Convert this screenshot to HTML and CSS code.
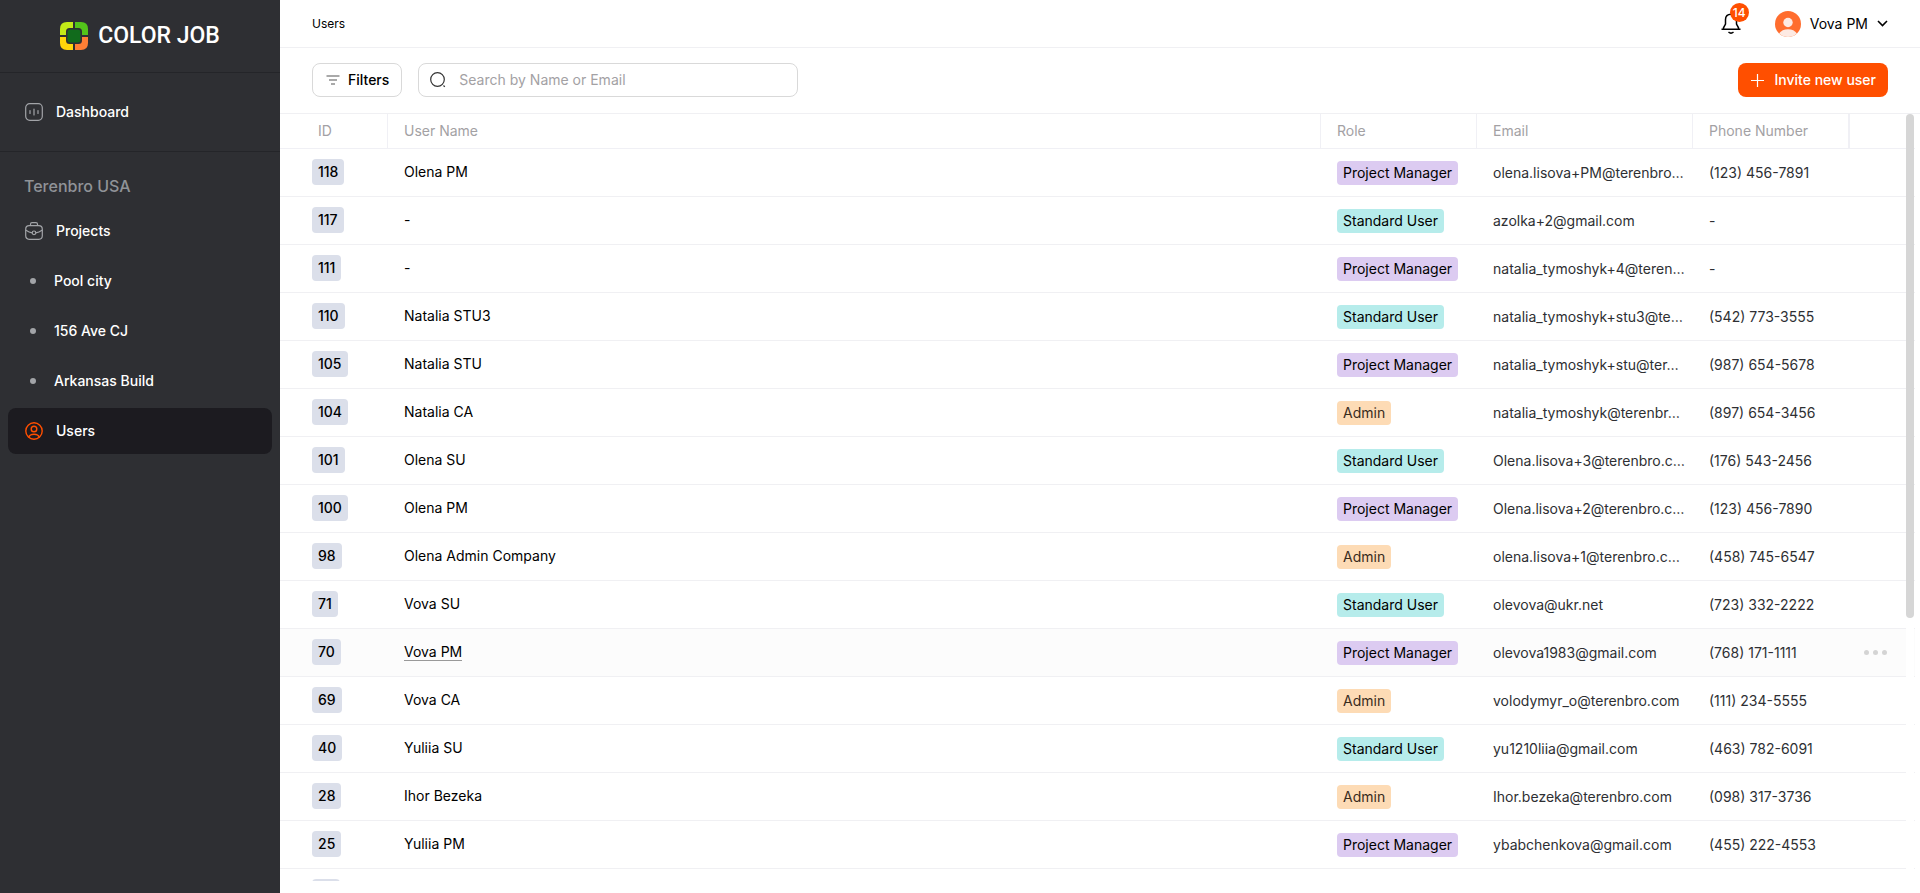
FILE: index.html
```html
<!DOCTYPE html>
<html lang="en">
<head>
<meta charset="utf-8">
<title>Users – Color Job</title>
<link rel="stylesheet" href="styles.css">
</head>
<body>
<div class="app">
  <aside class="sidebar">
    <a class="brand" href="#">
      <svg class="brand-mark" width="28" height="28" viewBox="0 0 28 28" aria-hidden="true">
        <path fill="#c3ea17" d="M7 0h6v6H9.500Q6 6 6 9.500V13H0V7Q0 0 7 0z"/>
        <path fill="#53c41a" d="M15 0h6q7 0 7 7v6h-6V9.500Q22 6 18.500 6H15z"/>
        <path fill="#ffd60a" d="M0 15h6v3.500Q6 22 9.500 22H13v6H7q-7 0-7-7z"/>
        <path fill="#ff7f35" d="M22 15h6v6q0 7-7 7h-6v-6h3.500q3.500 0 3.500-3.500z"/>
        <rect x="7.500" y="7.500" width="13" height="13" rx="3" fill="#116b1c"/>
      </svg>
      <span class="brand-name">COLOR JOB</span>
    </a>
    <nav class="nav nav-main">
      <a class="nav-item" href="#">
        <svg class="nav-icon" viewBox="0 0 18 18" aria-hidden="true"><rect x=".7" y=".7" width="16.600" height="16.600" rx="4"/><path d="M5 7.500v3M9 6v6M13 7.500v3"/></svg>
        Dashboard
      </a>
    </nav>
    <nav class="nav nav-company">
      <h2 class="nav-title">Terenbro USA</h2>
      <a class="nav-item" href="#">
        <svg class="nav-icon" viewBox="0 0 18 18" aria-hidden="true"><rect x=".7" y="3.700" width="16.600" height="13.600" rx="3.500"/><path d="M5.500 3.500V2.200Q5.500.7 7 .7h4q1.500 0 1.500 1.500v1.300M1 8.300q3 2.200 6.200 2.600M17 8.300q-3 2.200-6.200 2.600"/><circle cx="9" cy="10.800" r="1.800"/></svg>
        Projects
      </a>
      <a class="nav-item nav-sub" href="#">Pool city</a>
      <a class="nav-item nav-sub" href="#">156 Ave CJ</a>
      <a class="nav-item nav-sub" href="#">Arkansas Build</a>
      <a class="nav-item nav-active" href="#" aria-current="page">
        <svg class="nav-icon" viewBox="0 0 18 18" aria-hidden="true"><circle cx="9" cy="9" r="8.200"/><circle cx="9" cy="7" r="2.800"/><path d="M3.800 15.200q.8-3 5.200-3t5.200 3"/></svg>
        Users
      </a>
    </nav>
  </aside>

  <main class="main">
    <header class="topbar">
      <h1 class="page-title">Users</h1>
      <div class="topbar-right">
        <button class="bell" type="button" aria-label="Notifications">
          <svg width="20" height="22" viewBox="0 0 20 22" aria-hidden="true"><path d="M.5 16.200h19M2.500 16V14.800L4.500 11V6.500Q4.500 1.200 10 1.200T15.500 6.500V11l2 3.800V16M7.500 19q2.500 2.200 5 0"/></svg>
          <span class="bell-count">14</span>
        </button>
        <button class="account" type="button">
          <svg width="26" height="26" viewBox="0 0 26 26" aria-hidden="true"><circle cx="13" cy="13" r="13" fill="#ff6d2e"/><circle cx="13" cy="11.500" r="4.700" fill="#fdeae3"/><path d="M4 22.500Q7 18.200 13 18.200T22 22.500Q18 26 13 26T4 22.500z" fill="#fdeae3"/></svg>
          Vova PM
          <svg class="chevron" width="11" height="7" viewBox="0 0 11 7" aria-hidden="true"><path d="M1 1l4.500 4.500L10 1"/></svg>
        </button>
      </div>
    </header>

    <div class="toolbar">
      <button class="filters" type="button">
        <svg width="14" height="10" viewBox="0 0 14 10" aria-hidden="true"><path d="M.5 1h13M3 5h8M5 9h4"/></svg>
        Filters
      </button>
      <label class="search">
        <svg width="16" height="16" viewBox="0 0 16 16" aria-hidden="true"><circle cx="7.500" cy="7.500" r="6.800"/><path d="M13.500 13.500l1.300 1.300"/></svg>
        <input type="search" placeholder="Search by Name or Email" aria-label="Search by Name or Email">
      </label>
      <button class="invite" type="button">
        <svg width="13" height="13" viewBox="0 0 13 13" aria-hidden="true"><path d="M6.500 0v13M0 6.500h13"/></svg>
        Invite new user
      </button>
    </div>

    <div class="table-area">
      <table class="users">
        <colgroup><col class="c-id"><col><col class="c-role"><col class="c-email"><col class="c-phone"><col class="c-act"></colgroup>
        <thead><tr><th class="id">ID</th><th>User Name</th><th>Role</th><th>Email</th><th class="phone-head">Phone Number</th><th class="act"></th></tr></thead>
        <tbody>
          <tr><td class="id"><span class="tag">118</span></td><td>Olena PM</td><td class="low"><span class="role pm">Project Manager</span></td><td class="low soft">olena.lisova+PM@terenbro…</td><td class="low soft">(123) 456-7891</td><td></td></tr>
          <tr><td class="id"><span class="tag">117</span></td><td>-</td><td class="low"><span class="role su">Standard User</span></td><td class="low soft">azolka+2@gmail.com</td><td class="low soft">-</td><td></td></tr>
          <tr><td class="id"><span class="tag">111</span></td><td>-</td><td class="low"><span class="role pm">Project Manager</span></td><td class="low soft">natalia_tymoshyk+4@teren…</td><td class="low soft">-</td><td></td></tr>
          <tr><td class="id"><span class="tag">110</span></td><td>Natalia STU3</td><td class="low"><span class="role su">Standard User</span></td><td class="low soft">natalia_tymoshyk+stu3@te…</td><td class="low soft">(542) 773-3555</td><td></td></tr>
          <tr><td class="id"><span class="tag">105</span></td><td>Natalia STU</td><td class="low"><span class="role pm">Project Manager</span></td><td class="low soft">natalia_tymoshyk+stu@ter…</td><td class="low soft">(987) 654-5678</td><td></td></tr>
          <tr><td class="id"><span class="tag">104</span></td><td>Natalia CA</td><td class="low"><span class="role ad">Admin</span></td><td class="low soft">natalia_tymoshyk@terenbr…</td><td class="low soft">(897) 654-3456</td><td></td></tr>
          <tr><td class="id"><span class="tag">101</span></td><td>Olena SU</td><td class="low"><span class="role su">Standard User</span></td><td class="low soft">Olena.lisova+3@terenbro.c…</td><td class="low soft">(176) 543-2456</td><td></td></tr>
          <tr><td class="id"><span class="tag">100</span></td><td>Olena PM</td><td class="low"><span class="role pm">Project Manager</span></td><td class="low soft">Olena.lisova+2@terenbro.c…</td><td class="low soft">(123) 456-7890</td><td></td></tr>
          <tr><td class="id"><span class="tag">98</span></td><td>Olena Admin Company</td><td class="low"><span class="role ad">Admin</span></td><td class="low soft">olena.lisova+1@terenbro.c…</td><td class="low soft">(458) 745-6547</td><td></td></tr>
          <tr><td class="id"><span class="tag">71</span></td><td>Vova SU</td><td class="low"><span class="role su">Standard User</span></td><td class="low soft">olevova@ukr.net</td><td class="low soft">(723) 332-2222</td><td></td></tr>
          <tr class="hovered"><td class="id"><span class="tag">70</span></td><td><a class="user-link" href="#">Vova PM</a></td><td class="low"><span class="role pm">Project Manager</span></td><td class="low soft">olevova1983@gmail.com</td><td class="low soft">(768) 171-1111</td><td class="act"><button class="more" type="button" aria-label="More actions"><i></i><i></i><i></i></button></td></tr>
          <tr><td class="id"><span class="tag">69</span></td><td>Vova CA</td><td class="low"><span class="role ad">Admin</span></td><td class="low soft">volodymyr_o@terenbro.com</td><td class="low soft">(111) 234-5555</td><td></td></tr>
          <tr><td class="id"><span class="tag">40</span></td><td>Yuliia SU</td><td class="low"><span class="role su">Standard User</span></td><td class="low soft">yu1210liia@gmail.com</td><td class="low soft">(463) 782-6091</td><td></td></tr>
          <tr><td class="id"><span class="tag">28</span></td><td>Ihor Bezeka</td><td class="low"><span class="role ad">Admin</span></td><td class="low soft">Ihor.bezeka@terenbro.com</td><td class="low soft">(098) 317-3736</td><td></td></tr>
          <tr><td class="id"><span class="tag">25</span></td><td>Yuliia PM</td><td class="low"><span class="role pm">Project Manager</span></td><td class="low soft">ybabchenkova@gmail.com</td><td class="low soft">(455) 222-4553</td><td></td></tr>
          <tr><td class="id"><span class="tag tag-empty"></span></td><td></td><td></td><td></td><td></td><td></td></tr>
        </tbody>
      </table>
      <div class="scroll-track"><div class="scroll-thumb"></div></div>
    </div>
  </main>
</div>
</body>
</html>
```
FILE: styles.css
```css
* { box-sizing: border-box; }

body {
  margin: 0;
  font: 400 14px/20px Inter, "Liberation Sans", sans-serif;
  color: #000;
  background: #fff;
}

button { font: inherit; color: inherit; background: none; border: 0; padding: 0; cursor: pointer; }
a { color: inherit; text-decoration: none; }
svg { flex: none; fill: none; }

.app { display: flex; height: 100vh; }

/* Sidebar */
.sidebar { flex: none; width: 280px; background: #2e2f33; color: #fff; }
.brand {
  display: flex; align-items: center; justify-content: center; gap: 10px;
  height: 73px; border-bottom: 1px solid #242529;
}
.brand-name { font: 500 23px/28px Roboto, sans-serif; }
.nav { display: flex; flex-direction: column; gap: 4px; padding: 16px 8px; }
.nav-main { border-bottom: 1px solid #242529; }
.nav-company { padding-top: 20px; }
.nav-title { margin: 0 0 4px; padding: 2px 16px; font-size: 16px; line-height: 24px; font-weight: 500; color: #909398; }
.nav-item { display: flex; align-items: center; gap: 13px; height: 46px; padding: 0 17px; border-radius: 8px; font-weight: 500; }
.nav-icon { width: 18px; height: 18px; stroke: #a2a4a8; stroke-width: 1.2; stroke-linecap: round; }
.nav-sub { gap: 18px; padding-left: 22px; }
.nav-sub::before { content: ""; width: 6px; height: 6px; border-radius: 50%; background: #a2a4a8; }
.nav-active { background: #1c1b20; }
.nav-active .nav-icon { stroke: #ff4f00; stroke-width: 1.4; }

/* Top bar */
.main { flex: 1; min-width: 0; display: flex; flex-direction: column; padding-bottom: 12px; }
.topbar {
  display: flex; align-items: center; justify-content: space-between;
  flex: none; height: 48px; padding: 0 32px; border-bottom: 1px solid #f0f0f3;
}
.page-title { margin: 0; font-size: 12px; font-weight: 400; }
.topbar-right { display: flex; align-items: center; gap: 34px; }
.bell { position: relative; display: flex; }
.bell svg { stroke: #000; stroke-width: 1.5; }
.bell-count {
  position: absolute; top: -10px; right: -8px; width: 19px; height: 19px; border-radius: 50%;
  background: #ff4f00; color: #fff; font-size: 12px; line-height: 19px; font-weight: 500; text-align: center;
}
.account { display: flex; align-items: center; gap: 9px; }
.chevron { stroke: #000; stroke-width: 1.6; }

/* Toolbar */
.toolbar {
  display: flex; align-items: flex-start; gap: 16px;
  flex: none; height: 66px; padding: 15px 32px; border-bottom: 1px solid #f0f0f3;
}
.filters, .search { display: flex; align-items: center; height: 34px; border: 1px solid #d9d9d9; border-radius: 8px; }
.filters { gap: 8px; padding: 0 12px 0 13px; font-weight: 500; }
.filters svg { stroke: #555; stroke-width: 1.2; }
.search { gap: 13px; flex: 0 1 380px; padding: 0 11px; }
.search svg { stroke: #333; stroke-width: 1.2; }
.search input { flex: 1; min-width: 0; padding: 0; border: 0; outline: 0; font: inherit; background: none; }
.search input::placeholder { color: #a3a1a4; opacity: 1; }
.invite {
  display: flex; align-items: center; gap: 10px; height: 34px; margin-left: auto; padding: 0 12px 0 13px;
  border-radius: 8px; background: #ff4f00; color: #fff; font-weight: 500;
}
.invite svg { stroke: #fff; stroke-width: 1.2; }

/* Table */
.table-area { position: relative; flex: 1; min-height: 0; margin-right: 5px; overflow: hidden; }
.users { width: 100%; table-layout: fixed; border-collapse: separate; border-spacing: 0; }
.c-id { width: 108px; }
.c-role { width: 156px; }
.c-email { width: 216px; }
.c-phone { width: 157px; }
.c-act { width: 65px; }
th {
  height: 35px; padding: 0 16px; text-align: left; font-weight: 400; color: #a3a1a4;
  border-right: 1px solid #f0f0f5; border-bottom: 1px solid #f0f0f5;
}
th.id { padding-left: 38px; }
th.phone-head { border-right-width: 2px; }
th.act { border-right: 0; }
td {
  height: 48px; padding: 0 8px 1px 16px; border-bottom: 1px solid #f0f0f3;
  white-space: nowrap; overflow: hidden; text-overflow: ellipsis;
}
td.id { padding-left: 32px; }
td.low { padding-top: 1px; padding-bottom: 0; }
.soft { color: #2e2f33; }
.tag, .role { display: inline-block; vertical-align: middle; padding: 0 6px; border-radius: 4px; }
.tag { height: 26px; line-height: 26px; background: #dbdfea; font-weight: 500; }
.tag-empty { width: 28px; }
.role { height: 24px; line-height: 24px; }
.pm { background: #dccbf1; }
.su { background: #b6eceb; }
.ad { background: #fddbb5; color: #3a2b1c; }
.hovered { background: #fcfcfc; }
.user-link { border-bottom: 1px solid #999; }
td.act { padding-left: 14px; }
.more { display: flex; gap: 4px; }
.more i { width: 5px; height: 5px; border-radius: 50%; background: #d4d4d4; }

.scroll-track { position: absolute; top: 0; right: 1px; bottom: 0; width: 8px; background: #fff; }
.scroll-thumb { height: 504px; max-height: 100%; border-radius: 4px; background: #d6d6d6; }
```
